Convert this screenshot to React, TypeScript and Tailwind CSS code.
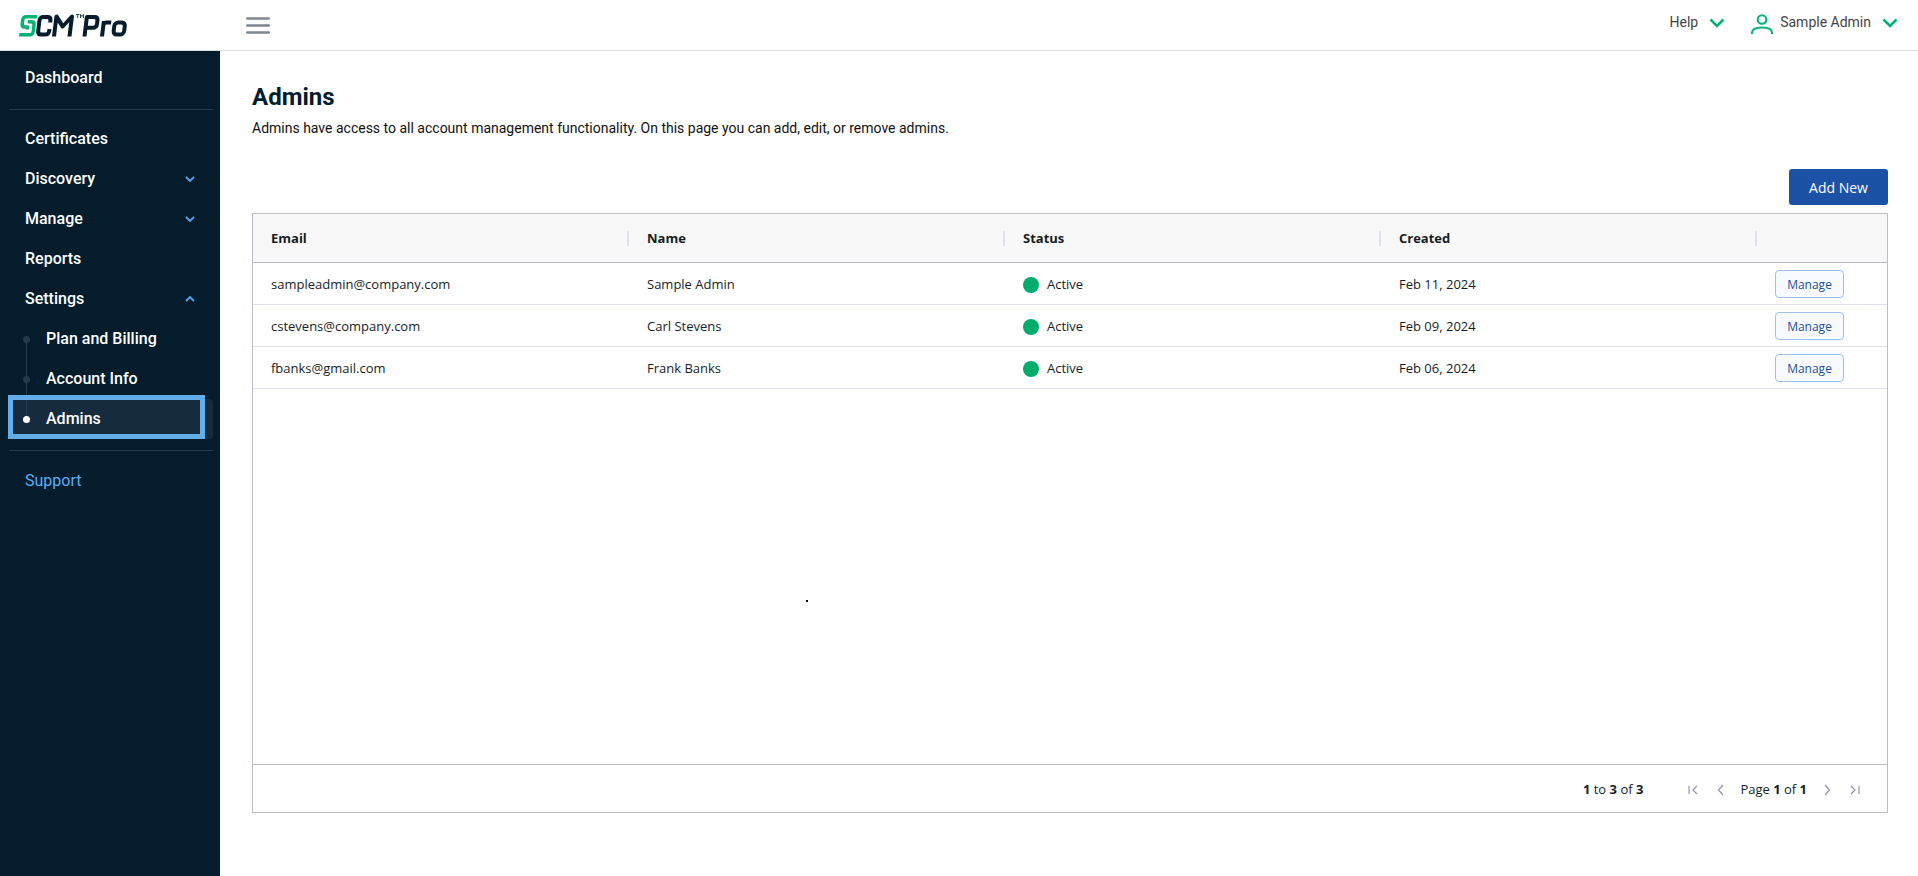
import { useState } from "react";
import type { ReactNode } from "react";

const admins = [
  { email: "sampleadmin@company.com", name: "Sample Admin", status: "Active", created: "Feb 11, 2024" },
  { email: "cstevens@company.com", name: "Carl Stevens", status: "Active", created: "Feb 09, 2024" },
  { email: "fbanks@gmail.com", name: "Frank Banks", status: "Active", created: "Feb 06, 2024" },
];

const columns = ["Email", "Name", "Status", "Created"];

function Logo() {
  return (
    <a href="#home" aria-label="SCM Pro" className="flex w-[220px] items-center pl-[18px]">
      <svg width="112" height="28" viewBox="0 0 112 28" fill="none" strokeWidth="4" strokeLinejoin="round">
        <g transform="translate(4 1) skewX(-7)">
          <g stroke="#00b373" strokeWidth="3.400">
            <path d="M15.500 4.700H5Q1.700 4.700 1.700 8V12Q1.700 15 4.500 15H7.500V17.500" />
            <path d="M7 9.800H10.500Q13.600 9.800 13.600 13V19.500Q13.600 22.800 10.500 22.800H0" />
          </g>
          <g stroke="#041c2c">
            <path d="M29.500 10.500V8.500Q29.500 5 26 5H22Q18.500 5 18.500 8.500V19Q18.500 22.500 22 22.500H26Q29.500 22.500 29.500 19V17" />
            <path d="M35 24.500V4.500L42.500 14.500L50.500 4.500V24.500" />
            <path d="M65.500 24.500V5H73Q76.500 5 76.500 8.500V12Q76.500 15.800 73 15.800H66" />
            <path d="M83 24.500V9M83 13.500Q83 10.500 86 10.500H90.500" />
            <rect x="94" y="10.500" width="10.500" height="12" rx="3.500" />
          </g>
        </g>
        <path d="M58 3.500H61.500M59.700 3.500V7M62.500 7V3.500L64 5.500L65.500 3.500V7" stroke="#041c2c" strokeWidth="0.800" />
      </svg>
    </a>
  );
}

function GreenChevron() {
  return (
    <svg width="16" height="10" viewBox="0 0 16 10" fill="none" stroke="#00b373" strokeWidth="2.500">
      <path d="M1.500 1.500L8 8L14.500 1.500" />
    </svg>
  );
}

function Header({ onToggle }: { onToggle: () => void }) {
  return (
    <header className="flex h-[51px] shrink-0 items-stretch border-b border-[#dcdcdc] bg-white">
      <Logo />
      <button type="button" aria-label="Toggle menu" onClick={onToggle} className="ml-[26px] flex items-center">
        <svg width="24" height="20" viewBox="0 0 24 20" stroke="#7d858f" strokeWidth="2.400" strokeLinecap="round">
          <path d="M1.200 3.500H22.800M1.200 10.500H22.800M1.200 17.500H22.800" />
        </svg>
      </button>
      <div className="ml-auto flex items-center pr-[20px] pb-[6px] text-[14px] text-[#444]">
        <button type="button" className="flex items-center gap-[11px]">
          Help
          <span className="pt-[2px]"><GreenChevron /></span>
        </button>
        <button type="button" className="ml-[26px] flex items-center">
          <svg width="22" height="20" viewBox="0 0 22 20" className="mt-[3px]" fill="none" stroke="#00b373" strokeWidth="2">
            <circle cx="11" cy="5.500" r="4.300" />
            <path d="M1 20V18.500Q1 13.500 11 13.500T21 18.500V20" />
          </svg>
          <span className="ml-[7px]">Sample Admin</span>
          <span className="ml-[11px] pt-[2px]"><GreenChevron /></span>
        </button>
      </div>
    </header>
  );
}

function NavItem({ label, arrow }: { label: string; arrow?: "down" | "up" }) {
  return (
    <a href={"#" + label.toLowerCase()} className="flex h-10 items-center justify-between pr-[25px] pl-[25px]">
      {label}
      {arrow && (
        <svg width="10" height="6" viewBox="0 0 10 6" fill="none" stroke="#4da6f0" strokeWidth="1.800">
          <path d={arrow === "down" ? "M1 1L5 5L9 1" : "M1 5L5 1L9 5"} />
        </svg>
      )}
    </a>
  );
}

function SubItem({ label, first, active }: { label: string; first?: boolean; active?: boolean }) {
  return (
    <a
      href={"#" + label.toLowerCase().replace(/ /g, "-")}
      className={"relative mr-[7px] ml-[9px] flex h-10 items-center rounded-[4px] pl-[37px] " + (active ? "bg-[#172b3e]" : "")}
    >
      {!first && <span className="absolute bottom-1/2 left-[17px] h-10 w-px bg-[#273b4c]" />}
      <span className={"absolute left-[14px] size-[7px] rounded-full " + (active ? "bg-white" : "bg-[#273b4c]")} />
      {label}
      {active && <span className="absolute -top-1 right-2 bottom-0 -left-px border-[5px] border-[#63aee8]" />}
    </a>
  );
}

function Sidebar() {
  return (
    <nav className="w-[220px] shrink-0 bg-[#041c2c] pt-[7px] text-[16px] font-medium text-white">
      <NavItem label="Dashboard" />
      <hr className="mt-[11px] mr-[7px] mb-[9px] ml-[9px] border-[#273b4c]" />
      <NavItem label="Certificates" />
      <NavItem label="Discovery" arrow="down" />
      <NavItem label="Manage" arrow="down" />
      <NavItem label="Reports" />
      <NavItem label="Settings" arrow="up" />
      <SubItem label="Plan and Billing" first />
      <SubItem label="Account Info" />
      <SubItem label="Admins" active />
      <hr className="mt-[11px] mr-[7px] mb-[10px] ml-[9px] border-[#273b4c]" />
      <div className="font-normal text-[#58b0f5]">
        <NavItem label="Support" />
      </div>
    </nav>
  );
}

function PageButton({ label, children }: { label: string; children: ReactNode }) {
  return (
    <button type="button" aria-label={label} disabled className="flex size-4 items-center justify-center">
      <svg width="12" height="12" viewBox="0 0 12 12" fill="none" stroke="#9297a6" strokeWidth="1.200">
        {children}
      </svg>
    </button>
  );
}

function AdminTable() {
  return (
    <section className="mt-[8px] flex h-[600px] flex-col border border-[#babfc7] font-['Open_Sans','Noto_Sans',sans-serif] text-[13px] text-[#181d1f]">
      <table className="w-full table-fixed border-separate border-spacing-0">
        <colgroup>
          <col />
          <col />
          <col />
          <col />
          <col className="w-[130px]" />
        </colgroup>
        <thead>
          <tr className="h-[49px] bg-[#f8f8f8] *:border-b *:border-[#babfc7]">
            {columns.map((c) => (
              <th key={c} className="p-0 pl-[18px] text-left font-bold">
                <div className="flex items-center justify-between">
                  <span className="pt-[2px]">{c}</span>
                  <span className="h-[15px] w-[2px] bg-[#dde2eb]" />
                </div>
              </th>
            ))}
            <th aria-label="Actions" />
          </tr>
        </thead>
        <tbody>
          {admins.map((a) => (
            <tr key={a.email} className="h-[42px] *:border-b *:border-[#dde2eb]">
              <td className="p-0 pt-[3px] pl-[18px]">{a.email}</td>
              <td className="p-0 pt-[3px] pl-[18px]">{a.name}</td>
              <td className="p-0 pt-[3px] pl-[18px]">
                <span className="flex items-center gap-2">
                  <span className="size-4 rounded-full bg-[#00ab6b]" />
                  {a.status}
                </span>
              </td>
              <td className="p-0 pt-[3px] pl-[18px]">{a.created}</td>
              <td className="p-0 pt-px pl-[18px]">
                <button type="button" className="block h-[28px] w-[69px] rounded-[4px] border border-[#a0bfee] bg-[#f7faff] pt-[2px] text-[12px] text-[#1c4fa0]">
                  Manage
                </button>
              </td>
            </tr>
          ))}
        </tbody>
      </table>
      <div className="flex-1 pt-[211px] pl-[553px]">
        <span className="block size-[2px] bg-black" />
      </div>
      <footer className="flex h-[48px] shrink-0 items-center justify-end border-t border-[#babfc7] pt-[2px] pr-[24px]">
        <span className="mr-[42px]"><b>1</b> to <b>3</b> of <b>3</b></span>
        <PageButton label="First page"><path d="M2 2V10M10 2L6 6L10 10" /></PageButton>
        <span className="w-[12px]" />
        <PageButton label="Previous page"><path d="M8 1L3.500 6L8 11" /></PageButton>
        <span className="mr-[12px] ml-[11px]">Page <b>1</b> of <b>1</b></span>
        <PageButton label="Next page"><path d="M4 1L8.500 6L4 11" /></PageButton>
        <span className="w-[12px]" />
        <PageButton label="Last page"><path d="M10 2V10M2 2L6 6L2 10" /></PageButton>
      </footer>
    </section>
  );
}

export default function App() {
  const [open, setOpen] = useState(true);
  return (
    <div className="flex min-h-screen flex-col bg-white font-[Roboto,sans-serif]">
      <Header onToggle={() => setOpen(!open)} />
      <div className="flex flex-1">
        {open && <Sidebar />}
        <main className="min-w-0 flex-1 pt-[30px] pr-[30px] pl-[32px]">
          <h1 className="text-[24px] leading-[32px] font-bold text-[#041c2c]">Admins</h1>
          <p className="mt-[4px] text-[14px] leading-[22px] text-[#111]">
            Admins have access to all account management functionality. On this page you can add, edit, or remove admins.
          </p>
          <div className="mt-[30px] flex justify-end">
            <button type="button" className="h-[36px] w-[99px] rounded-[3px] bg-[#1c52a5] pt-px font-['Open_Sans','Noto_Sans',sans-serif] text-[14px] text-white">
              Add New
            </button>
          </div>
          <AdminTable />
        </main>
      </div>
    </div>
  );
}
